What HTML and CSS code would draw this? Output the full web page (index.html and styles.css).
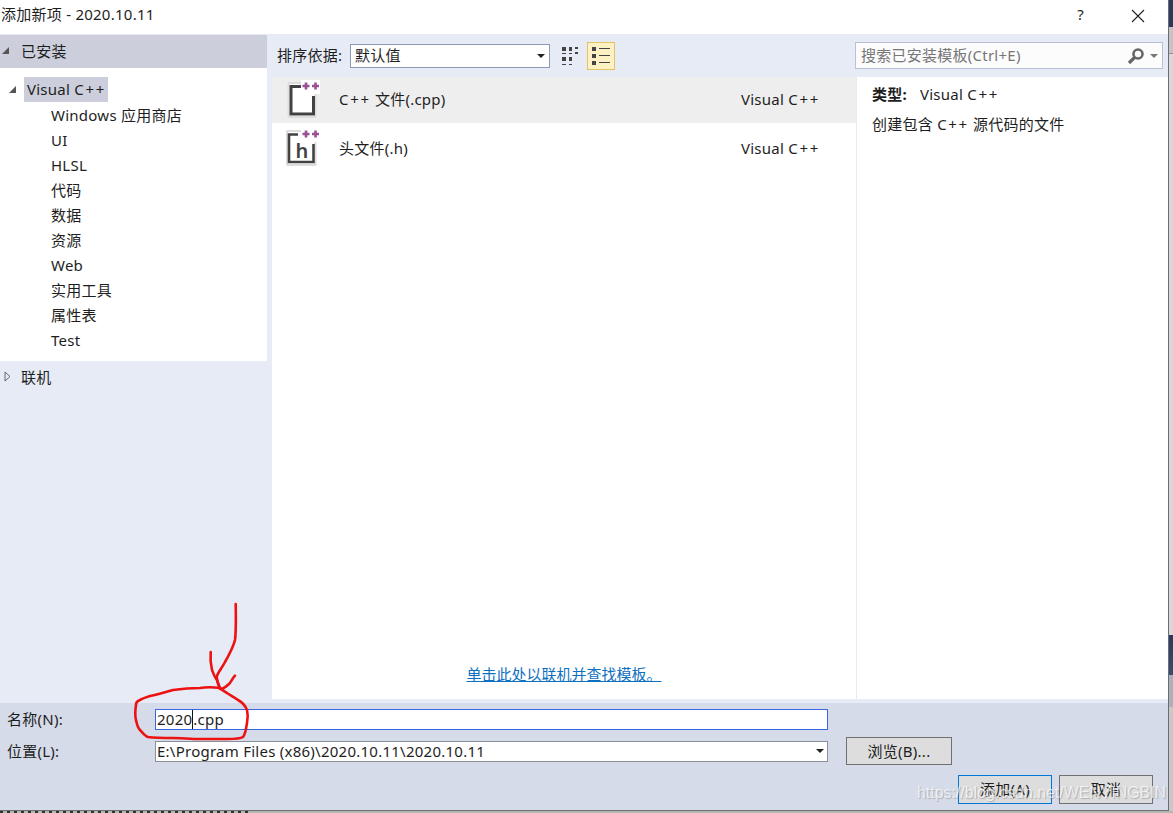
FILE: index.html
```html
<!DOCTYPE html>
<html lang="zh-CN">
<head>
    <meta charset="UTF-8">
    <title>添加新项 - 2020.10.11</title>
    <link rel="stylesheet" href="styles.css">
</head>
<body>
    <div class="screen">
        <div class="dialog">
            <div class="titlebar">
                <span class="title">添加新项 - 2020.10.11</span>
                <span class="help">?</span>
                <svg class="close" width="14" height="14" viewBox="0 0 14 14"><path d="M1 1L13 13M13 1L1 13" stroke="#222" stroke-width="1.1" fill="none"/></svg>
            </div>

            <div class="main">
                <div class="side">
                    <div class="side-head">
                        <svg class="arrow-open" width="9" height="9" viewBox="0 0 9 9"><path d="M8 1V8H1Z" fill="#555"/></svg>
                        <span>已安装</span>
                    </div>
                    <div class="tree">
                        <div class="tree-root">
                            <svg class="arrow-open" width="9" height="9" viewBox="0 0 9 9"><path d="M8 1V8H1Z" fill="#555"/></svg>
                            <span class="tree-selected">Visual <span class="cpp">C++</span></span>
                        </div>
                        <div class="tree-item">Windows 应用商店</div>
                        <div class="tree-item">UI</div>
                        <div class="tree-item">HLSL</div>
                        <div class="tree-item">代码</div>
                        <div class="tree-item">数据</div>
                        <div class="tree-item">资源</div>
                        <div class="tree-item">Web</div>
                        <div class="tree-item">实用工具</div>
                        <div class="tree-item">属性表</div>
                        <div class="tree-item">Test</div>
                    </div>
                    <div class="side-online">
                        <svg width="7" height="11" viewBox="0 0 7 11"><path d="M1 1L6 5.5L1 10Z" fill="none" stroke="#666"/></svg>
                        <span>联机</span>
                    </div>
                </div>

                <div class="content">
                    <div class="toolbar">
                        <span class="sort-label">排序依据:</span>
                        <div class="select">
                            <span>默认值</span>
                            <span class="caret"></span>
                        </div>
                        <svg class="view-grid" width="20" height="20" viewBox="0 0 20 20">
                            <g fill="#444">
                                <rect x="1" y="1" width="4" height="4"/><rect x="8" y="1" width="3" height="4"/><rect x="14" y="1" width="3" height="2"/>
                                <rect x="1" y="7" width="4" height="1"/><rect x="8" y="7" width="3" height="1"/><rect x="14" y="6" width="3" height="2"/>
                                <rect x="1" y="11" width="4" height="4"/><rect x="8" y="11" width="3" height="4"/>
                                <rect x="1" y="18" width="4" height="1"/><rect x="8" y="18" width="3" height="1"/>
                            </g>
                        </svg>
                        <div class="view-list">
                            <svg width="20" height="20" viewBox="0 0 20 20">
                                <g fill="#444">
                                    <rect x="1" y="1" width="4" height="4"/><rect x="8" y="2" width="11" height="1"/>
                                    <rect x="1" y="8" width="4" height="4"/><rect x="8" y="9" width="11" height="1"/>
                                    <rect x="1" y="15" width="4" height="4"/><rect x="8" y="16" width="11" height="1"/>
                                </g>
                            </svg>
                        </div>
                        <div class="search">
                            <span class="search-text">搜索已安装模板(Ctrl+E)</span>
                            <svg width="18" height="18" viewBox="0 0 18 18"><circle cx="11" cy="7" r="4.500" fill="none" stroke="#666" stroke-width="2.600"/><path d="M7.500 10.500L2 16" stroke="#666" stroke-width="3.200" fill="none"/></svg>
                            <span class="caret caret-light"></span>
                        </div>
                    </div>

                    <div class="panes">
                        <div class="list">
                            <div class="row row-active">
                                <svg class="file-icon" width="34" height="40" viewBox="0 0 34 40">
                                    <path d="M2.500 3H29.500V37H2.500Z" fill="#fff" stroke="#ddd" stroke-width="2" stroke-linejoin="round"/>
                                    <path d="M16 6.500H5V34H27.500V16" fill="none" stroke="#424242" stroke-width="3"/>
                                    <rect x="15" y="0" width="19" height="14" fill="#fff"/>
                                    <path d="M20 2.500V9.500M16.500 6H23.500M29.500 2.500V9.500M26 6H33" stroke="#9b4f96" stroke-width="2.600" fill="none"/>
                                </svg>
                                <span class="row-name"><span class="cpp">C++</span> 文件(.cpp)</span>
                                <span class="row-type">Visual <span class="cpp">C++</span></span>
                            </div>
                            <div class="row row-second">
                                <svg class="file-icon" width="34" height="40" viewBox="0 0 34 40">
                                    <path d="M1 3H29.500V37H1Z" fill="#fff" stroke="#ddd" stroke-width="2" stroke-linejoin="round"/>
                                    <path d="M12 6.500H3V34H27.500V16" fill="none" stroke="#424242" stroke-width="2.600"/>
                                    <rect x="15" y="0" width="19" height="14" fill="#fff"/>
                                    <path d="M20 2.500V9.500M16.500 6H23.500M29.500 2.500V9.500M26 6H33" stroke="#9b4f96" stroke-width="2.600" fill="none"/>
                                    <text class="icon-letter" x="9.500" y="30">h</text>
                                </svg>
                                <span class="row-name">头文件(.h)</span>
                                <span class="row-type">Visual <span class="cpp">C++</span></span>
                            </div>
                            <a class="online-link" href="#">单击此处以联机并查找模板。</a>
                        </div>
                        <div class="details">
                            <div class="details-type"><b>类型:</b><span>Visual <span class="cpp">C++</span></span></div>
                            <div class="details-desc">创建包含 <span class="cpp">C++</span> 源代码的文件</div>
                        </div>
                    </div>
                </div>
            </div>

            <div class="footer">
                <div class="form-row form-row-name">
                    <label class="form-label">名称(N):</label>
                    <div class="text-input text-input-focus">2020<span class="cursor"></span>.cpp</div>
                </div>
                <div class="form-row">
                    <label class="form-label">位置(L):</label>
                    <div class="text-input">
                        <span>E:\Program Files (x86)\2020.10.11\2020.10.11</span>
                        <span class="caret"></span>
                    </div>
                    <button class="btn btn-browse">浏览(B)...</button>
                </div>
                <div class="actions">
                    <button class="btn btn-primary">添加(A)</button>
                    <button class="btn">取消</button>
                </div>
            </div>
        </div>
        <div class="desk"></div>
    </div>
    <div class="leftover"></div>

    <!-- red pen marks drawn over the dialog -->
    <svg class="ink" width="1173" height="813" viewBox="0 0 1173 813">
        <path d="M235.700 604C236 620 236 632 235 640C233 648 229 655 225 662C222 668 218 672 216.700 677C217 682 219 685 220 688" />
        <path d="M210.700 652C210 660 211 666 212 670C214 675 215 678 217 680C218 684 219 687 220 689" />
        <path d="M235 675.700C232 679 231 682 229 684C226 687 224 688 221.700 689" />
        <path d="M220 688C212 687 206 687 200 688C190 688 180 689 173 690C165 692 157 695 150 696C144 698 141 699 140 700C137 701 136 703 136 705C135 711 135 716 136 720C137 725 138 728 140 730C143 733 145 736 148 737C156 738 165 738 173 738C182 738 190 739 200 739C210 739 218 739 227 739C233 739 240 739 243 737C246 733 246 728 247 723C248 718 248 714 247 710C245 705 242 702 238 700C234 697 230 695 227 693C224 691 222 690 220 688" />
    </svg>
    <span class="watermark">https://blog.csdn.net/WENYINGBIN</span>
</body>
</html>
```

FILE: styles.css
```css
* {
    box-sizing: border-box;
}
html, body {
    margin: 0;
    height: 813px;
    overflow: hidden;
}
body {
    position: relative;
    background-color: #b5b5b5;
    color: #1e1e1e;
    font-family: "Noto Sans", "Noto Sans CJK SC", sans-serif;
    font-size: 15px;
    letter-spacing: 0.25px;
}
.cpp {
    letter-spacing: 1.7px;
}
.screen {
    display: flex;
    height: 811px;
}
.dialog {
    width: 1169px;
    display: flex;
    flex-direction: column;
    background-color: #fff;
    border-right: 1px solid #6e6e6e;
    border-bottom: 1px solid #6e6e6e;
}
.desk {
    flex: 1;
    background: linear-gradient(to bottom, #2b3a5c 0, #2b3a5c 27px, #c4c4c8 27px, #c4c4c8 53px, #8b93a3 53px, #8b93a3 54px, #d8d8d8 54px, #d8d8d8 635px, #2b3a5c 635px, #3c4d70 675px, #aab0bc 675px, #aab0bc 707px, #c8c8c8 707px);
}
.leftover {
    height: 2px;
    background-image: repeating-linear-gradient(to right, #333, #333 3px, #b5b5b5 3px, #b5b5b5 7px);
    background-size: 250px 2px;
    background-repeat: no-repeat;
}

/* title */
.titlebar {
    height: 34px;
    display: flex;
    align-items: center;
    padding: 0 0 4px 1px;
}
.title {
    font-size: 15px;
    margin-bottom: 3px;
}
.help {
    margin-left: auto;
    margin-right: 47px;
    margin-bottom: 2px;
    font-size: 15px;
}
.close {
    margin-right: 23px;
    margin-top: 2px;
}

/* main area */
.main {
    height: 669px;
    display: flex;
    background-color: #e6ebf5;
    padding-bottom: 4px;
}
.side {
    width: 267px;
    margin-right: 5px;
    padding-top: 1px;
}
.side-head {
    height: 33px;
    background-color: #cccedb;
    display: flex;
    align-items: center;
    padding: 0 0 2px 1px;
}
.side-head .arrow-open {
    margin-right: 11px;
}
.tree {
    height: 293px;
    background-color: #fff;
    padding-top: 9px;
}
.tree-root {
    height: 25px;
    display: flex;
    align-items: center;
    padding-left: 8px;
}
.tree-selected {
    margin-left: 7px;
    padding: 0 2px 0 3px;
    line-height: 25px;
    background-color: #cccedb;
}
.tree-item {
    height: 25px;
    line-height: 26px;
    padding-left: 51px;
}
.side-online {
    display: flex;
    align-items: center;
    height: 32px;
    padding: 0 0 2px 4px;
}
.side-online span {
    margin-left: 10px;
}

.content {
    flex: 1;
    display: flex;
    flex-direction: column;
    min-width: 0;
}
.toolbar {
    height: 43px;
    flex: none;
    display: flex;
    align-items: center;
    padding-left: 5px;
    padding-right: 5px;
}
.sort-label {
    width: 73px;
    padding-bottom: 2px;
}
.select {
    width: 200px;
    height: 24px;
    background-color: #fff;
    border: 1px solid #8c9bb3;
    display: flex;
    align-items: center;
    justify-content: space-between;
    padding: 0 4px 2px 4px;
}
.caret {
    width: 0;
    height: 0;
    border-left: 4px solid transparent;
    border-right: 4px solid transparent;
    border-top: 4px solid #222;
}
.select .caret {
    margin-top: 2px;
}
.caret-light {
    border-top-color: #777;
    margin-left: 5px;
}
.view-grid {
    margin-left: 11px;
}
.view-list {
    width: 28px;
    height: 28px;
    margin-left: 6px;
    background-color: #fdf1c3;
    border: 1px solid #e5c365;
    display: flex;
    align-items: center;
    justify-content: center;
}
.search {
    width: 308px;
    height: 27px;
    margin-left: auto;
    background-color: #fcfcfd;
    border: 1px solid #b8c2d6;
    display: flex;
    align-items: center;
    padding: 0 4px 0 5px;
}
.search-text {
    flex: 1;
    color: #777;
    padding-bottom: 2px;
}

.panes {
    flex: 1;
    display: flex;
    min-height: 0;
}
.list {
    width: 584px;
    background-color: #fff;
    display: flex;
    flex-direction: column;
}
.row {
    height: 46px;
    display: flex;
    align-items: center;
    flex: none;
}
.row-second {
    height: 50px;
}
.row-active {
    background-color: #eeeeee;
}
.file-icon {
    margin-left: 14px;
    width: 34px;
    flex: none;
}
.icon-letter {
    font-family: "Noto Sans", sans-serif;
    font-size: 20px;
    font-weight: 600;
    fill: #424242;
}
.row-name {
    margin-left: 19px;
    width: 402px;
    padding-bottom: 3px;
}
.row-second .row-name {
    padding-bottom: 2px;
}
.row-active .row-type {
    padding-bottom: 2px;
}
.online-link {
    margin-top: auto;
    margin-bottom: 15px;
    align-self: center;
    color: #0e70c0;
    letter-spacing: 0;
}
.details {
    flex: 1;
    background-color: #fff;
    margin-left: 1px;
    padding: 5px 15px;
}
.details-type {
    height: 24px;
    line-height: 24px;
}
.details-type b {
    font-weight: 700;
    margin-right: 13px;
}
.details-desc {
    margin-top: 6px;
    height: 24px;
    line-height: 24px;
}

/* name + location form */
.footer {
    flex: 1;
    background-color: #d5dbe9;
    padding: 6px 15px 0 7px;
}
.form-row {
    display: flex;
    align-items: center;
    height: 28px;
    margin-top: 7px;
}
.form-row-name {
    height: 21px;
    margin-top: 0;
}
.form-label {
    width: 148px;
    padding-bottom: 2px;
}
.text-input {
    width: 673px;
    height: 21px;
    line-height: 19px;
    background-color: #fff;
    border: 1px solid #8a8f99;
    padding: 0 3px 0 1px;
    display: flex;
    align-items: center;
    justify-content: space-between;
}
.text-input-focus {
    border-color: #3b66e0;
    justify-content: flex-start;
}
.cursor {
    width: 1px;
    height: 19px;
    background-color: #111;
}
.btn {
    width: 94px;
    height: 29px;
    padding: 0 0 2px;
    background-color: #dddddd;
    border: 1px solid #707070;
    color: #1e1e1e;
    font-family: inherit;
    font-size: 15px;
    letter-spacing: inherit;
}
.btn-browse {
    width: 106px;
    height: 28px;
    margin-left: 18px;
}
.btn-primary {
    border-color: #0078d7;
}
.actions {
    display: flex;
    justify-content: flex-end;
    gap: 7px;
    margin-top: 10px;
}

/* overlays */
.ink {
    position: absolute;
    left: 0;
    top: 0;
    pointer-events: none;
}
.ink path {
    fill: none;
    stroke: #ee1111;
    stroke-width: 2.600;
    stroke-linecap: round;
    stroke-linejoin: round;
}
.watermark {
    position: absolute;
    left: 917px;
    top: 784px;
    font-family: "Liberation Sans", sans-serif;
    font-size: 15.900px;
    letter-spacing: 0;
    color: rgba(255, 255, 255, 0.7);
    text-shadow: 1px 1px 1px rgba(90, 90, 90, 0.35);
    white-space: nowrap;
}
```
